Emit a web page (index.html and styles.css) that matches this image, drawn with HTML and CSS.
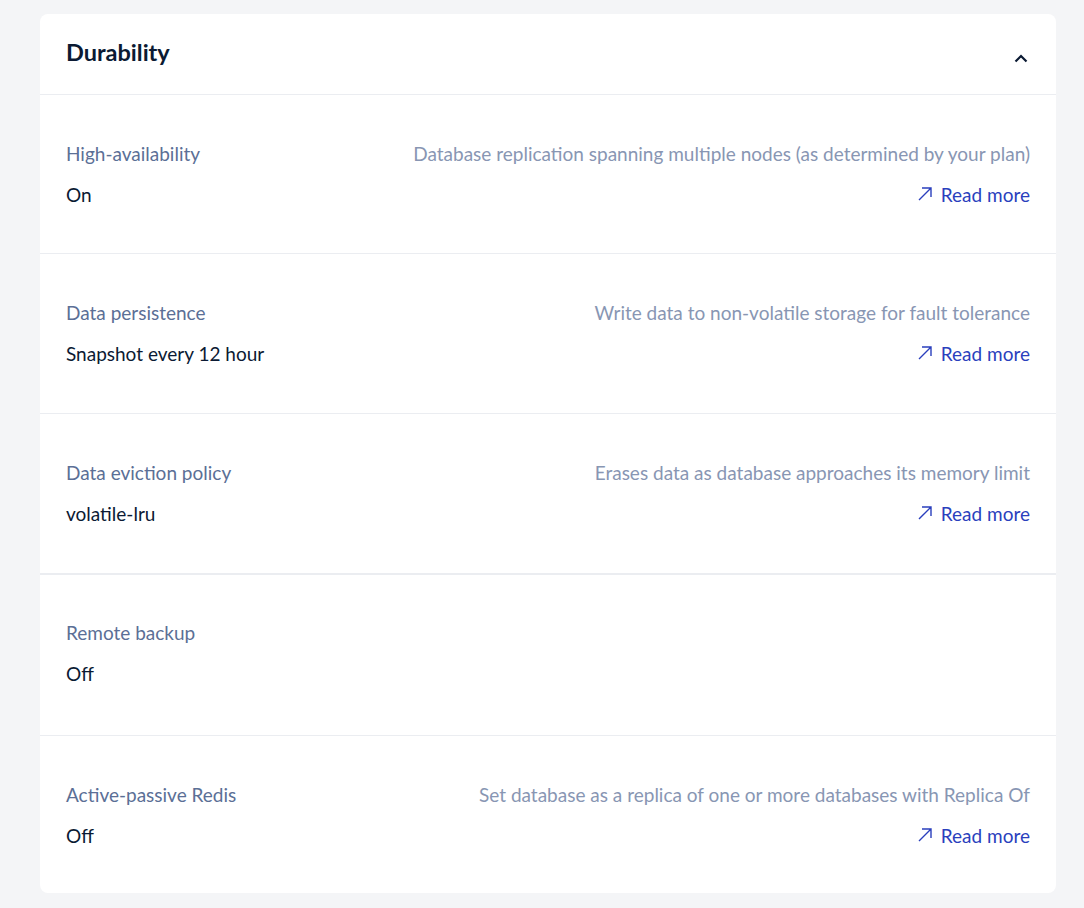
FILE: index.html
```html
<!DOCTYPE html>
<html lang="en">
<head>
<meta charset="utf-8">
<title>Durability</title>
<link rel="stylesheet" href="styles.css">
</head>
<body>
<section class="card">
  <header class="card-header">
    <h2 class="title">Durability</h2>
    <svg class="chevron" width="14" height="9" viewBox="0 0 14 9"><path d="M1.5 7.5 L7 2 L12.5 7.5" fill="none" stroke="#0b1a33" stroke-width="2.2"/></svg>
  </header>

  <div class="row row-first">
    <div class="top"><span class="label">High-availability</span><span class="desc">Database replication spanning multiple nodes (as determined by your plan)</span></div>
    <div class="bottom"><span class="value">On</span><a class="more" href="#"><svg width="14" height="14" viewBox="0 0 14 14"><path d="M1 13 L13 1 M4 1 H13 V10" fill="none" stroke="#2a3fbd" stroke-width="1.4"/></svg>Read more</a></div>
  </div>

  <div class="row">
    <div class="top"><span class="label">Data persistence</span><span class="desc">Write data to non-volatile storage for fault tolerance</span></div>
    <div class="bottom"><span class="value">Snapshot every 12 hour</span><a class="more" href="#"><svg width="14" height="14" viewBox="0 0 14 14"><path d="M1 13 L13 1 M4 1 H13 V10" fill="none" stroke="#2a3fbd" stroke-width="1.4"/></svg>Read more</a></div>
  </div>

  <div class="row">
    <div class="top"><span class="label">Data eviction policy</span><span class="desc">Erases data as database approaches its memory limit</span></div>
    <div class="bottom"><span class="value">volatile-lru</span><a class="more" href="#"><svg width="14" height="14" viewBox="0 0 14 14"><path d="M1 13 L13 1 M4 1 H13 V10" fill="none" stroke="#2a3fbd" stroke-width="1.4"/></svg>Read more</a></div>
  </div>

  <div class="row row-thick">
    <div class="top"><span class="label">Remote backup</span></div>
    <div class="bottom"><span class="value">Off</span></div>
  </div>

  <div class="row row-last">
    <div class="top"><span class="label">Active-passive Redis</span><span class="desc">Set database as a replica of one or more databases with Replica Of</span></div>
    <div class="bottom"><span class="value">Off</span><a class="more" href="#"><svg width="14" height="14" viewBox="0 0 14 14"><path d="M1 13 L13 1 M4 1 H13 V10" fill="none" stroke="#2a3fbd" stroke-width="1.4"/></svg>Read more</a></div>
  </div>
</section>
</body>
</html>
```

FILE: styles.css
```css
html, body {
  margin: 0;
  padding: 0;
  background: #f4f5f7;
}
body {
  padding: 14px 28px 15px 40px;
  font-family: Lato, "Open Sans", sans-serif;
}
.card {
  background: #ffffff;
  border-radius: 8px;
  width: 1016px;
}
.card-header {
  height: 81px;
  box-sizing: border-box;
  display: flex;
  align-items: center;
  justify-content: space-between;
  padding: 0 28px 0 26px;
  border-bottom: 1px solid #ebedf1;
}
.title {
  margin: -4px 0 0 0;
  font-size: 23.5px;
  font-weight: 700;
  color: #0b1a33;
}
.chevron {
  margin-top: 9px;
}
.row {
  height: 160px;
  box-sizing: border-box;
  padding: 46px 26px 0 26px;
  border-bottom: 1px solid #ebedf1;
  display: flex;
  flex-direction: column;
  gap: 17px;
}
.row-first {
  height: 159px;
}
.row-thick {
  border-top: 1px solid #ebedf1;
  height: 162px;
  padding-top: 45px;
}
.row-last {
  border-bottom: none;
  height: 157px;
}
.top, .bottom {
  display: flex;
  justify-content: space-between;
  align-items: center;
  height: 24px;
  font-size: 19px;
}
.label {
  color: #5b6f96;
}
.desc {
  color: #8896b3;
}
.value {
  color: #0b1a33;
}
.more {
  color: #2a3fbd;
  text-decoration: none;
  display: flex;
  align-items: center;
  gap: 9px;
}
```
